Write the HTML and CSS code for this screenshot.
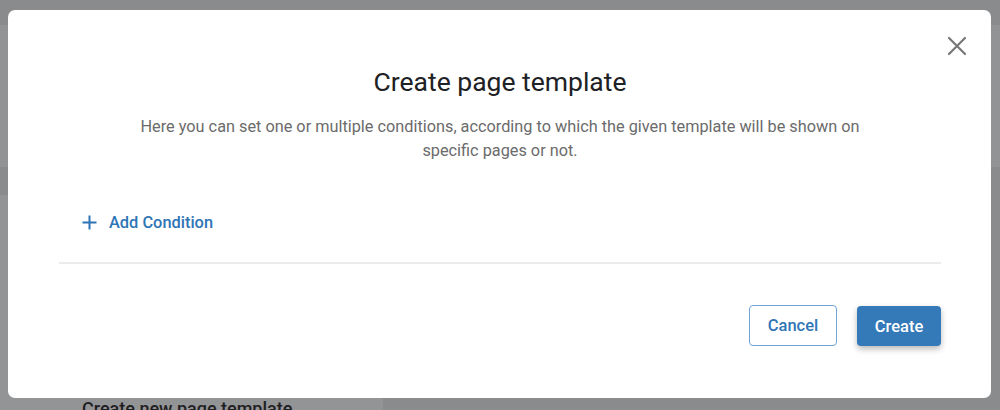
FILE: index.html
```html
<!DOCTYPE html>
<html lang="en">
<head>
    <meta charset="UTF-8">
    <meta name="viewport" content="width=device-width, initial-scale=1.0">
    <title>Create page template</title>
    <link rel="stylesheet" href="styles.css">
</head>
<body>
    <div class="page">
        <div class="top-card"></div>
        <div class="sidebar">
            <h4>Create new page template</h4>
        </div>
    </div>

    <div class="overlay">
        <div class="modal">
            <button class="close" aria-label="Close">
                <svg width="20" height="20" viewBox="0 0 20 20">
                    <path d="M2 2 L18 18 M18 2 L2 18" stroke="#777" stroke-width="2.2" stroke-linecap="round" fill="none"/>
                </svg>
            </button>
            <h3>Create page template</h3>
            <p class="desc">Here you can set one or multiple conditions, according to which the given template will be shown on specific pages or not.</p>
            <div class="conditions">
                <a href="#" class="add">
                    <svg width="15" height="15" viewBox="0 0 15 15">
                        <path d="M7.5 0.5 V14.5 M0.5 7.5 H14.5" stroke="#2f75b6" stroke-width="2" fill="none"/>
                    </svg>
                    Add Condition
                </a>
            </div>
            <div class="actions">
                <button class="btn cancel">Cancel</button>
                <button class="btn create">Create</button>
            </div>
        </div>
    </div>
</body>
</html>
```

FILE: styles.css
```css
body {
    font-family: Roboto, Arial, sans-serif;
    margin: 0;
    height: 410px;
    overflow: hidden;
    background-color: #8a8b8d;
}
.page {
    padding-top: 25px;
}
.top-card {
    height: 142px;
    background: #929395;
}
.sidebar {
    margin-top: 28px;
    width: 383px;
    height: 215px;
    background: #939496;
}
.sidebar h4 {
    margin: 0;
    padding: 204px 0 0 82px;
    font-size: 18px;
    line-height: 20px;
    font-weight: 500;
    color: #1f2022;
}
.overlay {
    position: fixed;
    inset: 0;
    padding: 10px 9px 12px 8px;
    display: flex;
}
.modal {
    position: relative;
    flex: 1;
    background: #fff;
    border-radius: 7px;
    padding: 56px 50px 0 51px;
    text-align: center;
}
.close {
    position: absolute;
    top: 26px;
    right: 24px;
    border: none;
    background: none;
    padding: 0;
    cursor: pointer;
}
.modal h3 {
    margin: 0;
    font-size: 26.5px;
    line-height: 32px;
    font-weight: 400;
    color: #202124;
}
.desc {
    margin: 17px auto 0;
    width: 745px;
    font-size: 16.3px;
    line-height: 24px;
    color: #6b6b6b;
}
.conditions {
    text-align: left;
    padding: 50px 0 28px 23px;
    border-bottom: 2px solid #ececec;
}
.add {
    display: inline-flex;
    align-items: center;
    gap: 12px;
    font-size: 16.4px;
    font-weight: 500;
    color: #2f75b6;
    text-decoration: none;
}
.actions {
    display: flex;
    justify-content: flex-end;
    gap: 20px;
    padding-top: 41px;
}
.btn {
    font-family: Roboto, Arial, sans-serif;
    font-size: 16.5px;
    font-weight: 500;
    border-radius: 4px;
    cursor: pointer;
    height: 41px;
}
.cancel {
    width: 88px;
    background: #fff;
    color: #2f75b6;
    border: 1px solid #6fa4d6;
}
.create {
    width: 84px;
    height: 40px;
    margin-top: 1px;
    background: #3479b8;
    color: #fff;
    border: none;
    box-shadow: 0 3px 6px rgba(0, 0, 0, 0.28);
}
```
